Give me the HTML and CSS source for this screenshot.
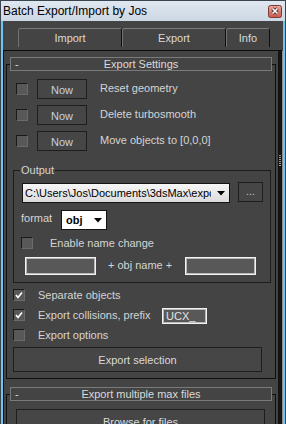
FILE: index.html
```html
<!DOCTYPE html>
<html lang="en">

<head>
    <meta charset="UTF-8">
    <meta name="viewport" content="width=device-width, initial-scale=1.0">
    <title>Batch Export/Import by Jos</title>
    <link rel="stylesheet" href="styles.css">
</head>

<body>
    <div class="window">
        <div class="titlebar">
            <span class="title">Batch Export/Import by Jos</span>
            <span class="close">
                <svg width="14" height="13" viewBox="0 0 14 13">
                    <defs>
                        <linearGradient id="cg" x1="0" y1="0" x2="0" y2="1">
                            <stop offset="0" stop-color="#e9a89c" />
                            <stop offset="1" stop-color="#c8584a" />
                        </linearGradient>
                    </defs>
                    <rect x="0.5" y="0.5" width="13" height="12" rx="2" fill="url(#cg)" stroke="#7d3a33" />
                    <path d="M4.5 3.5 L9.5 8.5 M9.5 3.5 L4.5 8.5" stroke="#5a2b27" stroke-width="3.2" />
                    <path d="M4.5 3.5 L9.5 8.5 M9.5 3.5 L4.5 8.5" stroke="#ffffff" stroke-width="1.6" />
                </svg>
            </span>
        </div>

        <div class="client">
            <div class="tabs">
                <div class="tab tab-wide">Import</div>
                <div class="tab tab-wide">Export</div>
                <div class="tab tab-info">Info</div>
            </div>

            <div class="panel">
                <div class="scroll">

                    <!-- rollout: export settings -->
                    <div class="rollout">
                        <div class="rollout-head"><span class="sign">-</span><span>Export Settings</span><span></span></div>

                        <div class="now-row first">
                            <span class="check"></span>
                            <span class="btn now">Now</span>
                            <span class="now-label">Reset geometry</span>
                        </div>
                        <div class="now-row">
                            <span class="check"></span>
                            <span class="btn now">Now</span>
                            <span class="now-label">Delete turbosmooth</span>
                        </div>
                        <div class="now-row">
                            <span class="check"></span>
                            <span class="btn now">Now</span>
                            <span class="now-label">Move objects to [0,0,0]</span>
                        </div>

                        <fieldset class="group">
                            <legend>Output</legend>
                            <div class="path-row">
                                <div class="combo path">
                                    <span class="combo-text">C:\Users\Jos\Documents\3dsMax\export</span>
                                    <svg class="arrow" width="8" height="5" viewBox="0 0 8 5"><path d="M0 0 H8 L4 4.5 Z" fill="#000" /></svg>
                                </div>
                                <span class="btn dots">...</span>
                            </div>
                            <div class="format-row">
                                <span class="format-label">format</span>
                                <div class="combo format">
                                    <span class="combo-text">obj</span>
                                    <svg class="arrow" width="8" height="5" viewBox="0 0 8 5"><path d="M0 0 H8 L4 4.5 Z" fill="#000" /></svg>
                                </div>
                            </div>
                            <div class="enable-row">
                                <span class="check"></span>
                                <span class="enable-label">Enable name change</span>
                            </div>
                            <div class="name-row">
                                <span class="textbox name"></span>
                                <span class="plus-label">+ obj name +</span>
                                <span class="textbox name"></span>
                            </div>
                        </fieldset>

                        <div class="opt-row">
                            <span class="check checked"></span>
                            <span class="opt-label">Separate objects</span>
                        </div>
                        <div class="opt-row">
                            <span class="check checked"></span>
                            <span class="opt-label">Export collisions, prefix</span>
                            <span class="textbox prefix">UCX_</span>
                        </div>
                        <div class="opt-row">
                            <span class="check"></span>
                            <span class="opt-label">Export options</span>
                        </div>

                        <div class="btn wide-btn">Export selection</div>
                    </div>

                    <!-- rollout: multiple files -->
                    <div class="rollout">
                        <div class="rollout-head"><span class="sign">-</span><span>Export multiple max files</span><span></span></div>
                        <div class="btn wide-btn browse">Browse for files</div>
                    </div>

                </div>
                <div class="scrollbar"><div class="grip"></div></div>
            </div>
        </div>
    </div>
</body>

</html>
```

FILE: styles.css
```css
* {
    box-sizing: border-box;
}

body {
    margin: 0;
    width: 286px;
    height: 424px;
    overflow: hidden;
    background: #444444;
    font-family: "Liberation Sans", Arial, sans-serif;
    font-size: 11px;
    color: #d4d4d4;
}

.window {
    width: 286px;
    height: 424px;
    border: 1px solid #3a4550;
    display: flex;
    flex-direction: column;
}

.titlebar {
    height: 20px;
    flex: none;
    display: flex;
    align-items: center;
    justify-content: space-between;
    padding: 0 3px 0 2px;
    background: linear-gradient(#dfe7f0, #cdd8e4);
}

.title {
    font-size: 12px;
    color: #000;
}

.close {
    display: flex;
}

.client {
    flex: 1;
    display: flex;
    flex-direction: column;
    background: #444444;
    border: 2px solid #6ac7ee;
    border-top: 0;
}

/* tabs */
.tabs {
    height: 29px;
    flex: none;
    display: flex;
    padding: 7px 0 0 15px;
}

.tab {
    height: 19px;
    line-height: 18px;
    text-align: center;
    color: #dadada;
    border-top: 1px solid #7c7c7c;
    border-left: 1px solid #727272;
    border-right: 1px solid #0e0e0e;
    border-radius: 3px 3px 0 0;
}

.tab-wide {
    width: 104px;
}

.tab-info {
    width: 44px;
}

/* panel with rollouts */
.panel {
    flex: 1;
    display: flex;
    min-height: 0;
    border-top: 1px solid #0e0e0e;
    border-left: 1px solid #0e0e0e;
    border-right: 1px solid #8e8e8e;
    border-bottom: 1px solid #2a2a2a;
}

.scroll {
    flex: 1;
    overflow: hidden;
}

.scrollbar {
    width: 4px;
    background: #141414;
    padding-top: 104px;
}

.grip {
    height: 12px;
    margin-left: 1px;
    width: 2px;
    background: repeating-linear-gradient(#9a9a9a 0 1px, transparent 1px 2px);
}

.rollout {
    position: relative;
    margin: 6px 2px 0;
    padding: 0 5px 7px 7px;
}

.rollout+.rollout {
    margin-top: 8px;
}

.rollout::before {
    content: "";
    position: absolute;
    left: 0;
    right: 0;
    top: 7px;
    bottom: 0;
    border: 1px solid #101010;
}

.rollout-head {
    position: relative;
    height: 14px;
    margin: 0 -1px 0 -3px;
    line-height: 12px;
    border: 1px solid #7a7a7a;
    background: #444444;
    display: grid;
    grid-template-columns: 1fr auto 1fr;
    color: #dadada;
}

.sign {
    padding-left: 4px;
}

/* generic controls */
.check {
    width: 12px;
    height: 12px;
    flex: none;
    background: #585858;
    border: 1px solid #1a1a1a;
    border-right-color: #6a6a6a;
    border-bottom-color: #6a6a6a;
}

.check.checked {
    background: #585858 url("data:image/svg+xml;utf8,<svg xmlns='http://www.w3.org/2000/svg' width='10' height='10'><path d='M2 5 L4 7.5 L8 2.5' fill='none' stroke='white' stroke-width='1.6'/></svg>") center / 10px 10px no-repeat;
}

.btn {
    display: flex;
    align-items: center;
    justify-content: center;
    background: #464646;
    border: 1px solid #1e1e1e;
    color: #dadada;
}

.textbox {
    display: block;
    flex: none;
    background: #585858;
    border: 1px solid #f2f2f2;
    box-shadow: inset 0 0 0 1px #b8b8b8;
    color: #e4e4e4;
}

/* now rows */
.now-row {
    display: flex;
    align-items: center;
    height: 20px;
    margin-top: 6px;
}

.now-row.first {
    margin-top: 8px;
}

.now-row .check {
    margin-left: 3px;
}

.now {
    width: 50px;
    height: 20px;
    margin-left: 9px;
    color: #c2d2e0;
    padding-top: 1px;
}

.now-label {
    margin-left: 13px;
    margin-bottom: 3px;
}

/* output group */
.group {
    margin: 12px 0 0;
    width: 258px;
    padding: 0 0 7px 6px;
    border: 1px solid #1c1c1c;
}

.group legend {
    padding: 0 1px;
    line-height: 14px;
}

.path-row {
    display: flex;
    align-items: flex-start;
    height: 20px;
    margin-top: 6px;
}

.combo {
    display: flex;
    align-items: center;
    height: 20px;
    border: 1px solid #141414;
    color: #000;
}

.path {
    width: 208px;
    margin-left: 2px;
    padding-left: 2px;
    background: linear-gradient(#f6f6f6, #dcdcdc);
}

.path .combo-text {
    width: 186px;
    overflow: hidden;
    white-space: nowrap;
}

.arrow {
    margin-left: auto;
    margin-right: 4px;
}

.dots {
    width: 25px;
    height: 20px;
    margin-left: 8px;
    margin-top: -1px;
    color: #b4c4d4;
    align-items: flex-end;
    padding-bottom: 4px;
}

.format-row {
    display: flex;
    align-items: center;
    height: 20px;
    margin-top: 7px;
}

.format-label {
    width: 40px;
    margin-left: 1px;
    margin-bottom: 5px;
}

.format {
    width: 46px;
    background: #ffffff;
    padding-left: 4px;
    font-weight: bold;
}

.enable-row {
    display: flex;
    align-items: center;
    height: 12px;
    margin-top: 7px;
}

.enable-row .check {
    margin-left: 1px;
}

.enable-label {
    margin-left: 17px;
}

.name-row {
    display: flex;
    align-items: center;
    height: 18px;
    margin-top: 8px;
}

.name {
    width: 71px;
    height: 18px;
}

.name:first-child {
    margin-left: 5px;
}

.plus-label {
    flex: none;
    width: 89px;
    padding-left: 12px;
    margin-bottom: 2px;
    white-space: nowrap;
}

/* options */
.opt-row {
    display: flex;
    align-items: center;
    height: 20px;
}

.group+.opt-row {
    margin-top: 2px;
}

.opt-label {
    margin-left: 13px;
    width: 124px;
}

.prefix {
    width: 45px;
    height: 16px;
    line-height: 14px;
    padding-left: 3px;
    margin-top: 2px;
}

.wide-btn {
    width: 249px;
    height: 25px;
    margin-top: 2px;
}

.browse {
    margin: 8px 0 0 3px;
}
```
